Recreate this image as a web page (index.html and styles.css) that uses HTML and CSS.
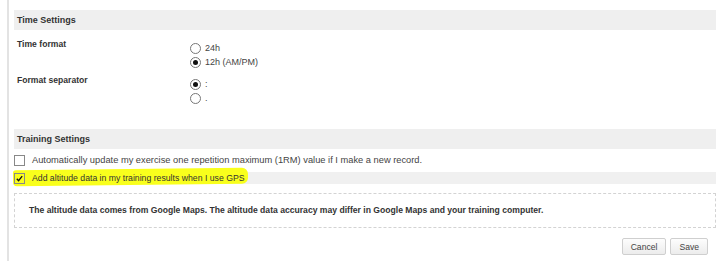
FILE: index.html
```html
<!DOCTYPE html>
<html lang="en">
  <head>
    <meta charset="UTF-8" />
    <title>Settings</title>
    <link rel="stylesheet" href="styles.css">
  </head>
  <body>
    <div class="page">
      <!-- Time settings -->
      <section class="settings time-settings">
        <h2 class="section-title">Time Settings</h2>
        <div class="setting-row">
          <div class="setting-label">Time format</div>
          <div class="options">
            <label class="option"><span class="radio"></span>24h</label>
            <label class="option"><span class="radio checked"></span>12h (AM/PM)</label>
          </div>
        </div>
        <div class="setting-row">
          <div class="setting-label">Format separator</div>
          <div class="options">
            <label class="option"><span class="radio checked"></span>:</label>
            <label class="option"><span class="radio"></span>.</label>
          </div>
        </div>
      </section>

      <!-- Training settings -->
      <section class="settings training-settings">
        <h2 class="section-title">Training Settings</h2>
        <label class="check-row">
          <span class="checkbox"></span>
          Automatically update my exercise one repetition maximum (1RM) value if I make a new record.
        </label>
        <label class="check-row shaded">
          <span class="marker">
            <span class="checkbox checked">
              <svg viewBox="0 0 10 10" width="9" height="9"><path d="M2 5.2 L4 7.4 L8 2.4" fill="none" stroke="#111" stroke-width="1.5"/></svg>
            </span>
            Add altitude data in my training results when I use GPS
          </span>
        </label>
        <div class="note">
          The altitude data comes from Google Maps. The altitude data accuracy may differ in Google Maps and your training computer.
        </div>
        <div class="actions">
          <button class="btn">Cancel</button>
          <button class="btn">Save</button>
        </div>
      </section>
    </div>
  </body>
</html>
```

FILE: styles.css
```css
/* General Styling */
body {
  margin: 0;
  background-color: #fff;
  font-family: "Liberation Sans", Arial, sans-serif;
  font-size: 9.3px;
  color: #333;
}

.page {
  margin-left: 7px;
  border-left: 2px solid #e3e3e3;
  padding: 10px 0 0 5px;
  width: 702px;
  height: 251px;
}

.section-title {
  margin: 0;
  height: 20px;
  line-height: 20px;
  padding-left: 3px;
  background-color: #efefef;
  font-size: 9px;
  font-weight: bold;
  color: #333;
}

.time-settings {
  padding-bottom: 24px;
  border-bottom: 1px solid #e8e8e8;
  margin-bottom: -1px;
}

.setting-row {
  display: flex;
  margin-top: 7px;
}

.setting-row + .setting-row {
  margin-top: 4px;
}

.setting-label {
  width: 172px;
  padding-left: 3px;
  line-height: 14px;
  font-size: 8.6px;
  font-weight: bold;
}

.options {
  margin-top: 4px;
  font-size: 9px;
}

.option {
  display: flex;
  align-items: center;
  height: 14px;
  color: #444;
}

.radio {
  width: 9px;
  height: 9px;
  border: 1px solid #777;
  border-radius: 50%;
  margin-right: 4px;
  margin-left: 1px;
  box-sizing: content-box;
  background: #fff;
  display: inline-flex;
  align-items: center;
  justify-content: center;
}

.radio.checked::after {
  content: "";
  width: 5px;
  height: 5px;
  border-radius: 50%;
  background: #111;
}

.check-row {
  display: flex;
  align-items: center;
  height: 12px;
  margin-top: 5px;
  color: #444;
}

.check-row.shaded {
  margin-top: 6px;
  background-color: #f0f0f0;
  font-size: 8.7px;
  color: #333;
}

.checkbox {
  width: 9px;
  height: 9px;
  border: 1px solid #888;
  background: #fff;
  margin-right: 7px;
  display: inline-flex;
}

.checkbox.checked {
  background: transparent;
}

.marker {
  position: relative;
  z-index: 0;
  display: flex;
  align-items: center;
  height: 12px;
  padding-right: 4px;
}

.marker::before {
  content: "";
  position: absolute;
  left: -1px;
  right: 0;
  top: -3px;
  bottom: -1px;
  background: #f9ff1c;
  border-radius: 3px 6px 6px 4px;
  transform: rotate(-0.6deg);
  z-index: -1;
}

.note {
  margin-top: 9px;
  height: 33px;
  line-height: 33px;
  padding-left: 14px;
  border: 1px dashed #d3d3d3;
  font-size: 8.6px;
  font-weight: bold;
  color: #333;
}

.actions {
  display: flex;
  justify-content: flex-end;
  gap: 4px;
  margin-top: 10px;
  padding-right: 8px;
}

.btn {
  height: 17px;
  padding: 0 8px;
  font-family: "Liberation Sans", Arial, sans-serif;
  font-size: 8.6px;
  color: #444;
  border: 1px solid #cfcfcf;
  border-radius: 2px;
  background: linear-gradient(#fdfdfd, #ececec);
}
```
